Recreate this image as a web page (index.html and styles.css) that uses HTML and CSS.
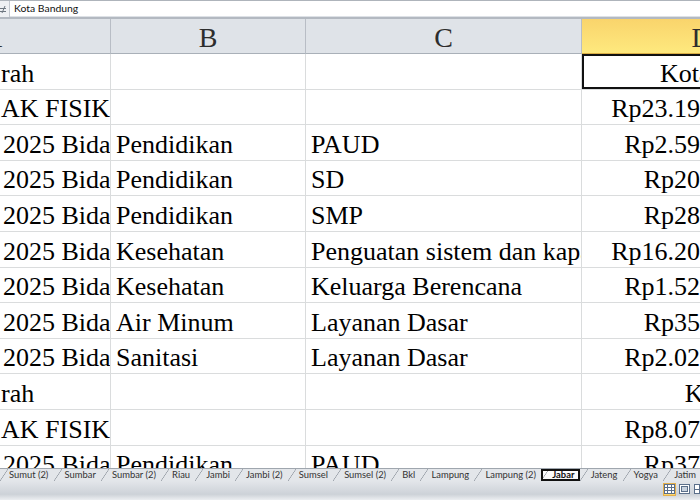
FILE: index.html
```html
<!DOCTYPE html>
<html lang="id">
<head>
<meta charset="utf-8">
<title>Jabar</title>
<link rel="stylesheet" href="styles.css">
</head>
<body>
<div class="app">
  <div class="formula-bar">
    <div class="fx">
      <svg width="8" height="15" viewBox="0 0 8 15"><path d="M0 6.5h6M0 9.5h6M2 11l3-7" stroke="#6d7680" stroke-width="1" fill="none"/></svg>
    </div>
    <div class="formula-input">Kota Bandung</div>
  </div>

  <div class="sheet">
    <div class="grid">
      <div class="ch ch-a"><span>A</span></div>
      <div class="ch">B</div>
      <div class="ch">C</div>
      <div class="ch ch-sel">D</div>

      <div class="c c-a">rah</div>
      <div class="c"></div>
      <div class="c"></div>
      <div class="c txt-r active">Kota Bandung</div>

      <div class="c c-a">AK FISIK</div>
      <div class="c"></div>
      <div class="c"></div>
      <div class="c num">Rp23.191.428.000</div>

      <div class="c c-a sub">2025 Bidang Pendidikan</div>
      <div class="c">Pendidikan</div>
      <div class="c">PAUD</div>
      <div class="c num">Rp2.596.804.000</div>

      <div class="c c-a sub">2025 Bidang Pendidikan</div>
      <div class="c">Pendidikan</div>
      <div class="c">SD</div>
      <div class="c num">Rp201.457.000</div>

      <div class="c c-a sub">2025 Bidang Pendidikan</div>
      <div class="c">Pendidikan</div>
      <div class="c">SMP</div>
      <div class="c num">Rp283.163.000</div>

      <div class="c c-a sub">2025 Bidang Kesehatan</div>
      <div class="c">Kesehatan</div>
      <div class="c">Penguatan sistem dan kapasitas</div>
      <div class="c num">Rp16.203.612.000</div>

      <div class="c c-a sub">2025 Bidang Kesehatan</div>
      <div class="c">Kesehatan</div>
      <div class="c">Keluarga Berencana</div>
      <div class="c num">Rp1.524.316.000</div>

      <div class="c c-a sub">2025 Bidang Air Minum</div>
      <div class="c">Air Minum</div>
      <div class="c">Layanan Dasar</div>
      <div class="c num">Rp356.980.000</div>

      <div class="c c-a sub">2025 Bidang Sanitasi</div>
      <div class="c">Sanitasi</div>
      <div class="c">Layanan Dasar</div>
      <div class="c num">Rp2.025.096.000</div>

      <div class="c c-a">rah</div>
      <div class="c"></div>
      <div class="c"></div>
      <div class="c txt-r">Kota Banjar</div>

      <div class="c c-a">AK FISIK</div>
      <div class="c"></div>
      <div class="c"></div>
      <div class="c num">Rp8.076.215.000</div>

      <div class="c c-a sub">2025 Bidang Pendidikan</div>
      <div class="c">Pendidikan</div>
      <div class="c">PAUD</div>
      <div class="c num">Rp372.480.000</div>

      <div class="c c-a sub">2025 Bidang Pendidikan</div>
      <div class="c">Pendidikan</div>
      <div class="c">SD</div>
      <div class="c num">Rp3.118.520.000</div>
    </div>
  </div>

  <div class="tabs">
    <div class="tab first">Sumut (2)</div>
    <div class="tab">Sumbar</div>
    <div class="tab">Sumbar (2)</div>
    <div class="tab">Riau</div>
    <div class="tab">Jambi</div>
    <div class="tab">Jambi (2)</div>
    <div class="tab">Sumsel</div>
    <div class="tab">Sumsel (2)</div>
    <div class="tab">Bkl</div>
    <div class="tab">Lampung</div>
    <div class="tab">Lampung (2)</div>
    <div class="tab active">Jabar</div>
    <div class="tab">Jateng</div>
    <div class="tab">Yogya</div>
    <div class="tab">Jatim</div>
  </div>

  <div class="status">
    <div class="view-btn on">
      <svg width="11" height="10" viewBox="0 0 11 10"><rect x="0.5" y="0.5" width="10" height="9" fill="#fff" stroke="#5b6f8a"/><path d="M0.5 3.5h10M0.5 6.5h10M3.5 0.5v9M7.5 0.5v9" stroke="#5b6f8a"/></svg>
    </div>
    <div class="view-btn">
      <svg width="11" height="10" viewBox="0 0 11 10"><rect x="0.5" y="0.5" width="10" height="9" fill="#fff" stroke="#5b6f8a"/><rect x="2.5" y="2.5" width="6" height="5" fill="#c9d3df" stroke="#5b6f8a"/></svg>
    </div>
    <div class="view-btn last">
      <svg width="11" height="10" viewBox="0 0 11 10"><rect x="0.5" y="0.5" width="10" height="9" fill="#fff" stroke="#5b6f8a"/><path d="M5.5 0.5v9M0.5 5.5h10" stroke="#5b6f8a"/></svg>
    </div>
  </div>
</div>
</body>
</html>
```

FILE: styles.css
```css
* { box-sizing: border-box; margin: 0; padding: 0; }

html, body {
  width: 700px;
  height: 500px;
  overflow: hidden;
  background: #fff;
}

body {
  font-family: "Liberation Serif", "Times New Roman", serif;
}

.app {
  display: flex;
  flex-direction: column;
  width: 700px;
  height: 500px;
  overflow: hidden;
}

/* formula bar */
.formula-bar {
  flex: none;
  height: 19px;
  display: flex;
  background: #fff;
  border-top: 1px solid #aeb4bb;
  border-bottom: 2px solid #b3b9c1;
  box-shadow: inset 0 -1px 0 #dde1e6;
}

.fx {
  flex: none;
  width: 10px;
  display: flex;
  align-items: center;
  background: #eef0f3;
  border-right: 1px solid #c3c8cf;
}

.formula-input {
  flex: 1;
  padding-left: 4px;
  font-family: Lato, "Open Sans", sans-serif;
  font-size: 10.4px;
  line-height: 15px;
  color: #111;
}

/* sheet */
.sheet {
  flex: 1;
  min-height: 0;
  overflow: hidden;
}

.grid {
  display: grid;
  grid-template-columns: 111px 195px 276px 240px;
  grid-template-rows: 35px;
  grid-auto-rows: 35.6px;
  width: 822px;
}

.ch {
  display: flex;
  align-items: flex-end;
  justify-content: center;
  overflow: hidden;
  background: #dfe3e8;
  border-right: 1px solid #b8bdc5;
  border-bottom: 1px solid #a9b0b8;
  font-size: 28px;
  line-height: 30px;
  color: #2d2d2d;
}

.ch-a {
  justify-content: flex-start;
}

.ch-a span {
  margin-left: -18px;
}

.ch-sel {
  background: linear-gradient(#f9d46c, #fee97e);
  border-right-color: #e2b94f;
  border-bottom-color: #d9ad45;
}

.c {
  display: flex;
  align-items: flex-end;
  overflow: hidden;
  white-space: nowrap;
  padding: 0 5px;
  border-right: 1px solid #dadcdd;
  border-bottom: 1px solid #dadcdd;
  font-size: 26px;
  line-height: 30px;
  color: #000;
}

.c-a { padding-left: 1px; }
.c-a.sub { padding-left: 3px; }

.num {
  justify-content: flex-end;
  padding-right: 17px;
}

.txt-r {
  justify-content: flex-end;
  padding-right: 10px;
}

.active {
  box-shadow: inset 0 0 0 2px #111;
}

/* sheet tabs */
.tabs {
  flex: none;
  height: 13px;
  display: flex;
  overflow: hidden;
  background: #e3e6ea;
  border-top: 1px solid #9fa6ae;
  font-family: Lato, "Open Sans", sans-serif;
  font-size: 9.4px;
  line-height: 12px;
  color: #333;
}

.tab {
  flex: none;
  padding: 0 5.2px 0 11px;
  white-space: nowrap;
  background: linear-gradient(to bottom right, transparent calc(50% - 0.6px), #8e959e 50%, transparent calc(50% + 0.6px)) left top / 8px 12px no-repeat;
}

.tab.first {
  padding-left: 9px;
}

.tab.active {
  line-height: 12px;
  font-weight: 700;
  color: #111;
  background:
    linear-gradient(to bottom right, transparent calc(50% - 0.6px), #8e959e 50%, transparent calc(50% + 0.6px)) left top / 8px 12px no-repeat,
    linear-gradient(#fff, #f7f8f9);
}

/* status bar */
.status {
  flex: none;
  height: 19px;
  display: flex;
  justify-content: flex-end;
  align-items: center;
  gap: 2px;
  padding-bottom: 3px;
  background: linear-gradient(#e3e6ea, #cdd2d8 70%, #eceef1);
}

.view-btn {
  flex: none;
  width: 13px;
  height: 13px;
  display: flex;
  align-items: center;
  justify-content: center;
  border: 1px solid transparent;
}

.view-btn.on {
  border-color: #e5b04a;
  background: linear-gradient(#fdeaa4, #fbd66e);
}

.view-btn.last {
  margin-right: -6px;
}
```
